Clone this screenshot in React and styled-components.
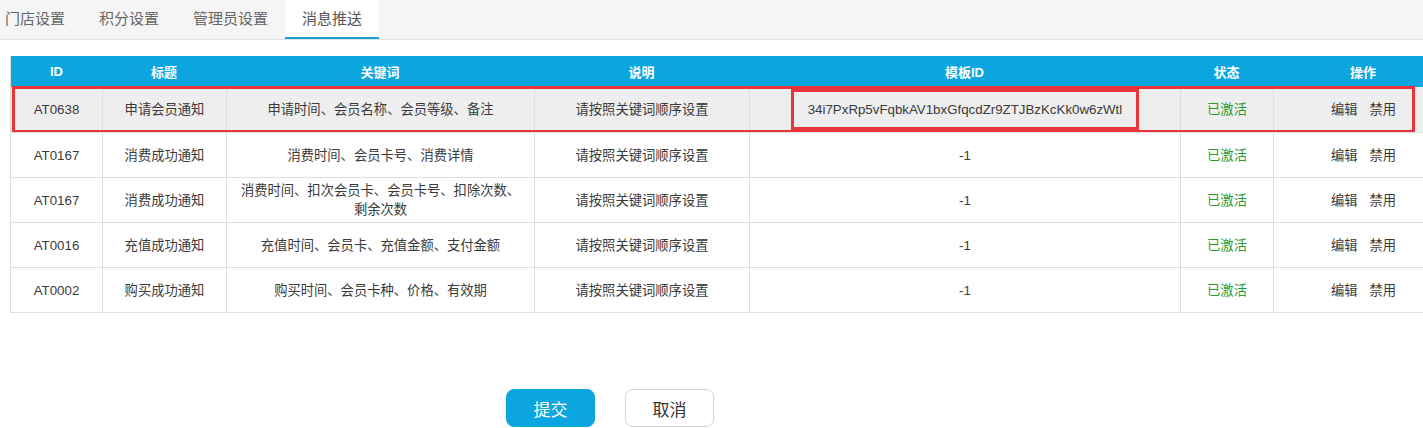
import React from 'react';
import styled, { createGlobalStyle } from 'styled-components';

const GlobalStyle = createGlobalStyle`
  html, body {
    margin: 0;
    padding: 0;
    background: #fff;
    overflow: hidden;
  }
  body {
    font-family: 'Liberation Sans', 'Noto Sans CJK SC', sans-serif;
    color: #333;
  }
`;

const COLS = '91px 124px 308px 215px 431px 93px 180px';

const Page = styled.div`
  width: 1423px;
  height: 428px;
  overflow: hidden;
`;

const TabBar = styled.div`
  display: flex;
  height: 39px;
  background: #f5f5f5;
  border-bottom: 1px solid #e2e2e2;
  margin-left: -12px;
`;

const Tab = styled.div`
  box-sizing: border-box;
  height: 39px;
  padding: 0 17px 2px;
  display: flex;
  align-items: center;
  font-size: 15px;
  color: ${(p) => (p.active ? '#555' : '#666')};
  background: ${(p) => (p.active ? '#fff' : 'transparent')};
  border-bottom: 2px solid ${(p) => (p.active ? '#1a9fd6' : 'transparent')};
  white-space: nowrap;
`;

const Content = styled.div`
  padding: 16px 0 0 10px;
`;

const Table = styled.div`
  width: 1443px;
  border-left: 1px solid #ddd;
  border-bottom: 1px solid #ddd;
`;

const HeadRow = styled.div`
  display: grid;
  grid-template-columns: ${COLS};
  height: 31px;
  background: #0ba5df;
`;

const HeadCell = styled.div`
  display: flex;
  align-items: center;
  justify-content: center;
  color: #fff;
  font-weight: bold;
  font-size: 13px;
`;

const Row = styled.div`
  position: relative;
  display: grid;
  grid-template-columns: ${COLS};
  height: 45px;
  box-sizing: border-box;
  background: ${(p) => (p.highlight ? '#eeeeee' : '#fff')};
  border-top: ${(p) => (p.first ? 'none' : '1px solid #ddd')};

  &::after {
    content: '';
    display: ${(p) => (p.highlight ? 'block' : 'none')};
    position: absolute;
    left: 1px;
    top: -1px;
    width: 1403px;
    height: 47px;
    box-sizing: border-box;
    border: 3px solid #e8353b;
    pointer-events: none;
  }
`;

const Cell = styled.div`
  display: flex;
  align-items: center;
  justify-content: center;
  text-align: center;
  padding: 0 12px;
  font-size: 13.3px;
  line-height: 19px;
  color: ${(p) => (p.green ? '#2b9a2b' : '#3a3a3a')};
  border-left: ${(p) => (p.first ? 'none' : '1px solid #ddd')};
  overflow: hidden;
`;

const BoxedId = styled.span`
  display: inline-flex;
  align-items: center;
  box-sizing: border-box;
  height: 41px;
  padding: 0 14px;
  border: 3px solid #e8353b;
  white-space: nowrap;
`;

const Actions = styled.div`
  display: flex;
  gap: 12px;
`;

const Footer = styled.div`
  display: flex;
  gap: 30px;
  padding: 76px 0 0 496px;
`;

const Button = styled.button`
  width: 89px;
  height: 38px;
  border-radius: 8px;
  font-family: 'Liberation Sans', 'Noto Sans CJK SC', sans-serif;
  font-size: 17px;
  cursor: pointer;
  border: 1px solid ${(p) => (p.primary ? '#0ba5df' : '#d4d4d4')};
  background: ${(p) => (p.primary ? '#0ba5df' : '#fff')};
  color: ${(p) => (p.primary ? '#fff' : '#333')};
`;

const tabs = ['门店设置', '积分设置', '管理员设置', '消息推送'];
const headers = ['ID', '标题', '关键词', '说明', '模板ID', '状态', '操作'];

const rows = [
  { id: 'AT0638', title: '申请会员通知', keys: '申请时间、会员名称、会员等级、备注', tpl: '34i7PxRp5vFqbkAV1bxGfqcdZr9ZTJBzKcKk0w6zWtl', highlight: true },
  { id: 'AT0167', title: '消费成功通知', keys: '消费时间、会员卡号、消费详情', tpl: '-1' },
  { id: 'AT0167', title: '消费成功通知', keys: '消费时间、扣次会员卡、会员卡号、扣除次数、剩余次数', tpl: '-1' },
  { id: 'AT0016', title: '充值成功通知', keys: '充值时间、会员卡、充值金额、支付金额', tpl: '-1' },
  { id: 'AT0002', title: '购买成功通知', keys: '购买时间、会员卡种、价格、有效期', tpl: '-1' },
];

const App = () => (
  <Page>
    <GlobalStyle />
    <TabBar>
      {tabs.map((t, i) => (
        <Tab key={t} active={i === 3}>
          {t}
        </Tab>
      ))}
    </TabBar>
    <Content>
      <Table>
        <HeadRow>
          {headers.map((h) => (
            <HeadCell key={h}>{h}</HeadCell>
          ))}
        </HeadRow>
        {rows.map((r, idx) => (
          // eslint-disable-next-line react/no-array-index-key
          <Row key={`${r.id}_${idx}`} first={idx === 0} highlight={r.highlight}>
            <Cell first>{r.id}</Cell>
            <Cell>{r.title}</Cell>
            <Cell>{r.keys}</Cell>
            <Cell>请按照关键词顺序设置</Cell>
            <Cell>{r.highlight ? <BoxedId>{r.tpl}</BoxedId> : r.tpl}</Cell>
            <Cell green>已激活</Cell>
            <Cell>
              <Actions>
                <span>编辑</span>
                <span>禁用</span>
              </Actions>
            </Cell>
          </Row>
        ))}
      </Table>
      <Footer>
        <Button primary>提交</Button>
        <Button>取消</Button>
      </Footer>
    </Content>
  </Page>
);

export default App;
